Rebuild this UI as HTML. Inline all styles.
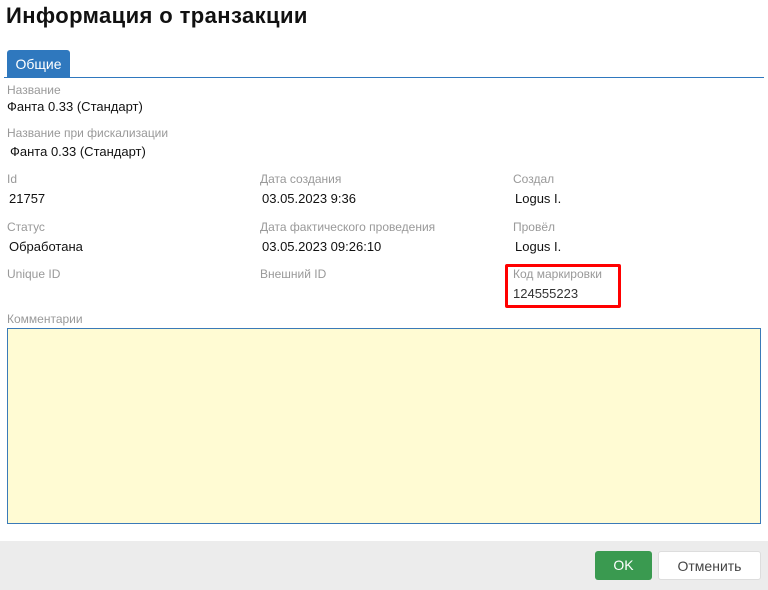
<!DOCTYPE html><html><head><meta charset="utf-8"><style>
body{margin:0;width:768px;height:590px;background:#fff;font-family:"Liberation Sans",sans-serif;position:relative;overflow:hidden}
.a{position:absolute;white-space:nowrap}
.l{font-size:12px;color:#999}
.v{font-size:13px;color:#111}
</style></head><body>
<div class="a" style="left:6px;top:3px;font-size:22px;font-weight:bold;color:#111;letter-spacing:0.4px">Информация о транзакции</div>
<div class="a" style="left:7px;top:50px;width:63px;height:27px;background:#2f78be;border-radius:3px 3px 0 0;color:#fff;font-size:14px;line-height:28px;text-align:center">Общие</div>
<div class="a" style="left:4px;top:77px;width:760px;height:1px;background:#2f78be"></div>
<div class="a l" style="left:7px;top:83px">Название</div>
<div class="a v" style="left:7px;top:99px">Фанта 0.33 (Стандарт)</div>
<div class="a l" style="left:7px;top:126px">Название при фискализации</div>
<div class="a v" style="left:10px;top:144px">Фанта 0.33 (Стандарт)</div>
<div class="a l" style="left:7px;top:172px">Id</div>
<div class="a v" style="left:9px;top:191px">21757</div>
<div class="a l" style="left:260px;top:172px">Дата создания</div>
<div class="a v" style="left:262px;top:191px">03.05.2023 9:36</div>
<div class="a l" style="left:513px;top:172px">Создал</div>
<div class="a v" style="left:515px;top:191px">Logus I.</div>
<div class="a l" style="left:7px;top:220px">Статус</div>
<div class="a v" style="left:9px;top:239px">Обработана</div>
<div class="a l" style="left:260px;top:220px">Дата фактического проведения</div>
<div class="a v" style="left:262px;top:239px">03.05.2023 09:26:10</div>
<div class="a l" style="left:513px;top:220px">Провёл</div>
<div class="a v" style="left:515px;top:239px">Logus I.</div>
<div class="a l" style="left:7px;top:267px">Unique ID</div>
<div class="a l" style="left:260px;top:267px">Внешний ID</div>
<div class="a" style="left:505px;top:264px;width:110px;height:38px;border:3px solid #f00;border-radius:2px"></div>
<div class="a l" style="left:513px;top:267px">Код маркировки</div>
<div class="a v" style="left:513px;top:286px;color:#333">124555223</div>
<div class="a l" style="left:7px;top:312px">Комментарии</div>
<div class="a" style="left:7px;top:328px;width:752px;height:194px;background:#fffbd3;border:1px solid #3a7ab8"></div>
<div class="a" style="left:0;top:541px;width:768px;height:49px;background:#ececec"></div>
<div class="a" style="left:595px;top:551px;width:57px;height:29px;background:#3a9a50;border-radius:3px;color:#fff;font-size:14px;line-height:29px;text-align:center">OK</div>
<div class="a" style="left:658px;top:551px;width:101px;height:27px;background:#fff;border:1px solid #ddd;border-radius:3px;color:#444;font-size:14px;line-height:28px;text-align:center">Отменить</div>
</body></html>
